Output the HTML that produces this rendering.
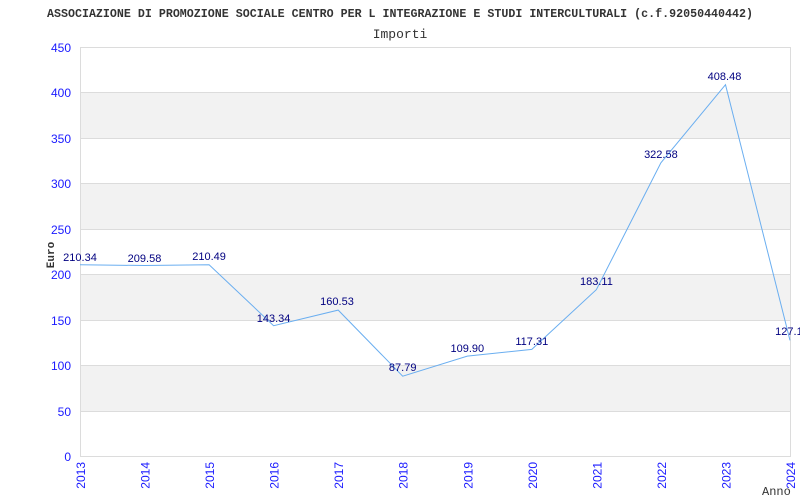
<!DOCTYPE html><html><head><style>body{margin:0;background:#fff}svg{display:block}</style></head><body>
<svg width="800" height="500" xmlns="http://www.w3.org/2000/svg">
<text x="47" y="17" textLength="706" lengthAdjust="spacingAndGlyphs" font-family="Liberation Mono,monospace" font-weight="bold" font-size="11.5" fill="#333">ASSOCIAZIONE DI PROMOZIONE SOCIALE CENTRO PER L INTEGRAZIONE E STUDI INTERCULTURALI (c.f.92050440442)</text>
<text x="400" y="38" text-anchor="middle" font-family="Liberation Mono,monospace" font-size="13" fill="#333">Importi</text>
<g fill="#f2f2f2"><rect x="80" y="92" width="710" height="46"/><rect x="80" y="183" width="710" height="46"/><rect x="80" y="274" width="710" height="46"/><rect x="80" y="365" width="710" height="46"/></g>
<g stroke="#dcdcdc" stroke-width="1">
<line x1="80" y1="47.5" x2="790" y2="47.5"/><line x1="80" y1="92.5" x2="790" y2="92.5"/><line x1="80" y1="138.5" x2="790" y2="138.5"/><line x1="80" y1="183.5" x2="790" y2="183.5"/><line x1="80" y1="229.5" x2="790" y2="229.5"/><line x1="80" y1="274.5" x2="790" y2="274.5"/><line x1="80" y1="320.5" x2="790" y2="320.5"/><line x1="80" y1="365.5" x2="790" y2="365.5"/><line x1="80" y1="411.5" x2="790" y2="411.5"/><line x1="80" y1="456.5" x2="790" y2="456.5"/>
<line x1="80.5" y1="47" x2="80.5" y2="457"/><line x1="790.5" y1="47" x2="790.5" y2="457"/></g>
<g font-family="Liberation Sans,sans-serif" font-size="12" fill="#1a1aff" text-anchor="end">
<text x="71" y="52">450</text><text x="71" y="97">400</text><text x="71" y="143">350</text><text x="71" y="188">300</text><text x="71" y="234">250</text><text x="71" y="279">200</text><text x="71" y="325">150</text><text x="71" y="370">100</text><text x="71" y="416">50</text><text x="71" y="461">0</text></g>
<polyline fill="none" stroke="#6aaef0" stroke-width="1" points="80,264.8 144.5,265.5 209.1,264.7 273.6,325.7 338.2,310.1 402.7,376.2 467.3,356.1 531.8,349.4 596.4,289.6 660.9,162.8 725.5,84.7 790,340.4"/>
<g font-family="Liberation Sans,sans-serif" font-size="11" fill="#000080" text-anchor="middle">
<text x="80" y="261">210.34</text><text x="144.5" y="262">209.58</text><text x="209.1" y="260">210.49</text><text x="273.6" y="322">143.34</text><text x="337" y="305">160.53</text><text x="402.7" y="371">87.79</text><text x="467.3" y="352">109.90</text><text x="531.8" y="345">117.31</text><text x="596.4" y="285">183.11</text><text x="660.9" y="158">322.58</text><text x="724.5" y="80">408.48</text><text x="792" y="335">127.18</text></g>
<text transform="translate(54,255) rotate(-90)" text-anchor="middle" font-family="Liberation Mono,monospace" font-weight="bold" font-size="11" fill="#333">Euro</text>
<text x="762" y="495" font-family="Liberation Mono,monospace" font-size="12" fill="#333">Anno</text>
<g font-family="Liberation Sans,sans-serif" font-size="12" fill="#1a1aff" text-anchor="end">
<text transform="translate(85,462) rotate(-90)">2013</text><text transform="translate(149.5,462) rotate(-90)">2014</text><text transform="translate(214.1,462) rotate(-90)">2015</text><text transform="translate(278.6,462) rotate(-90)">2016</text><text transform="translate(343.2,462) rotate(-90)">2017</text><text transform="translate(407.7,462) rotate(-90)">2018</text><text transform="translate(472.3,462) rotate(-90)">2019</text><text transform="translate(536.8,462) rotate(-90)">2020</text><text transform="translate(601.4,462) rotate(-90)">2021</text><text transform="translate(665.9,462) rotate(-90)">2022</text><text transform="translate(730.5,462) rotate(-90)">2023</text><text transform="translate(795,462) rotate(-90)">2024</text></g>
</svg></body></html>
